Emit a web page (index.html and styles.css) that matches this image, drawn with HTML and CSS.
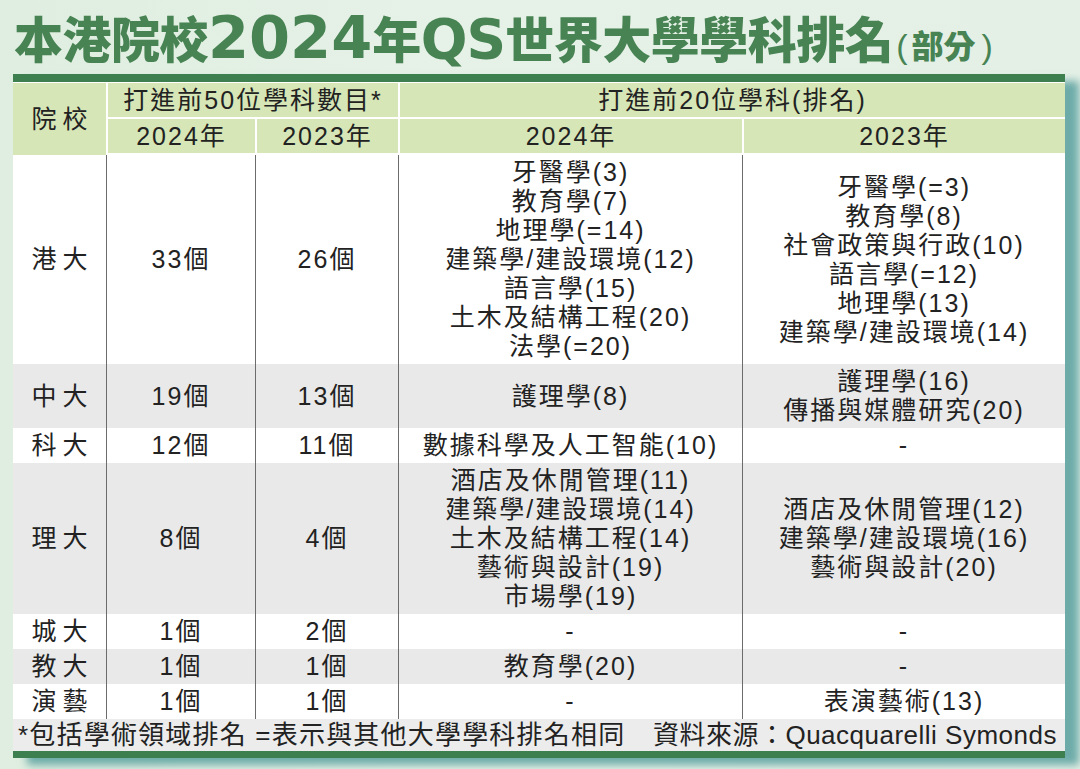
FILE: index.html
```html
<!DOCTYPE html>
<html lang="zh-Hant">
<head>
<meta charset="utf-8">
<title>本港院校2024年QS世界大學學科排名</title>
<link rel="stylesheet" href="styles.css">
</head>
<body>
<div class="page">
  <h1 class="title">本港院校<span class="num">2024</span>年<span class="qs">QS</span>世界大學學科排名<span class="sub"><span class="p">(</span>部分<span class="p pr">)</span></span></h1>
  <div class="panel">
    <table class="rank">
      <colgroup>
        <col class="c1"><col class="c2"><col class="c3"><col class="c4"><col class="c5">
      </colgroup>
      <thead>
        <tr>
          <th rowspan="2" class="school">院校</th>
          <th colspan="2" class="top">打進前50位學科數目*</th>
          <th colspan="2" class="top">打進前20位學科(排名)</th>
        </tr>
        <tr>
          <th>2024年</th>
          <th>2023年</th>
          <th>2024年</th>
          <th>2023年</th>
        </tr>
      </thead>
      <tbody>
        <tr class="w">
          <td class="school">港大</td>
          <td>33個</td>
          <td>26個</td>
          <td>牙醫學(3)<br>教育學(7)<br>地理學(=14)<br>建築學/建設環境(12)<br>語言學(15)<br>土木及結構工程(20)<br>法學(=20)</td>
          <td>牙醫學(=3)<br>教育學(8)<br>社會政策與行政(10)<br>語言學(=12)<br>地理學(13)<br>建築學/建設環境(14)</td>
        </tr>
        <tr class="g">
          <td class="school">中大</td>
          <td>19個</td>
          <td>13個</td>
          <td>護理學(8)</td>
          <td>護理學(16)<br>傳播與媒體研究(20)</td>
        </tr>
        <tr class="w">
          <td class="school">科大</td>
          <td>12個</td>
          <td>11個</td>
          <td>數據科學及人工智能(10)</td>
          <td>-</td>
        </tr>
        <tr class="g">
          <td class="school">理大</td>
          <td>8個</td>
          <td>4個</td>
          <td>酒店及休閒管理(11)<br>建築學/建設環境(14)<br>土木及結構工程(14)<br>藝術與設計(19)<br>市場學(19)</td>
          <td>酒店及休閒管理(12)<br>建築學/建設環境(16)<br>藝術與設計(20)</td>
        </tr>
        <tr class="w">
          <td class="school">城大</td>
          <td>1個</td>
          <td>2個</td>
          <td>-</td>
          <td>-</td>
        </tr>
        <tr class="g">
          <td class="school">教大</td>
          <td>1個</td>
          <td>1個</td>
          <td>教育學(20)</td>
          <td>-</td>
        </tr>
        <tr class="w">
          <td class="school">演藝</td>
          <td>1個</td>
          <td>1個</td>
          <td>-</td>
          <td>表演藝術(13)</td>
        </tr>
      </tbody>
    </table>
    <div class="foot">
      <span class="note">*包括學術領域排名 =表示與其他大學學科排名相同</span>
      <span class="src">資料來源：Quacquarelli Symonds</span>
    </div>
  </div>
</div>
</body>
</html>
```

FILE: styles.css
```css
html, body {
  margin: 0;
  padding: 0;
}

body {
  width: 1080px;
  height: 769px;
  overflow: hidden;
  background: linear-gradient(90deg, #dfeee0 0%, #e6f1e7 40%, #e4f0e6 100%);
  font-family: "Liberation Sans", "Noto Sans CJK TC", sans-serif;
  color: #222;
}

.page {
  padding: 0 0 0 13px;
}

.title {
  margin: 0;
  padding: 9px 0 0 1px;
  height: 74px;
  box-sizing: border-box;
  font-family: "Noto Sans CJK TC", sans-serif;
  font-weight: 900;
  font-size: 49px;
  line-height: 56px;
  color: #478353;
  white-space: nowrap;
  letter-spacing: -0.5px;
}

.title .num {
  font-family: "DejaVu Sans", sans-serif;
  font-weight: 700;
  font-size: 59px;
  letter-spacing: 0;
}

.title .qs {
  font-family: "DejaVu Sans", sans-serif;
  font-weight: 700;
  font-size: 55px;
  letter-spacing: -1px;
}

.title .sub {
  font-size: 32px;
  font-weight: 900;
  letter-spacing: 0;
}

.title .sub .p {
  font-family: "Liberation Sans", sans-serif;
  font-weight: 400;
  font-size: 34px;
  margin: 0 4px 0 3px;
}

.title .sub .pr {
  margin: 0 0 0 6px;
}

.panel {
  width: 1052px;
  border-top: 8px solid #3e7f4f;
  box-shadow: 14px 7px 8px rgba(70, 148, 148, 0.75);
  background: #fff;
}

.rank {
  width: 1052px;
  table-layout: fixed;
  border-collapse: separate;
  border-spacing: 0;
  font-size: 25px;
  line-height: 29px;
  letter-spacing: 2px;
}

.c1 { width: 93px; }
.c2 { width: 149px; }
.c3 { width: 143px; }
.c4 { width: 344px; }
.c5 { width: 323px; }

.rank th {
  background: #d6e6b6;
  font-weight: 400;
  height: 34px;
  padding: 0;
  text-align: center;
  border-left: 2px solid #fff;
}

.rank thead tr:first-child th {
  border-top: 1px solid #fff;
}

.rank thead tr:first-child th.top {
  border-bottom: 2px solid #fff;
}

.rank th.school {
  border-left: 0;
  letter-spacing: 6px;
  text-indent: 6px;
}

.rank thead tr:last-child th {
  border-bottom: 2px solid #fff;
}

.rank td {
  padding: 3px 0;
  text-align: center;
  vertical-align: middle;
  border-left: 1px solid #6c6c6c;
}

.rank td.school {
  border-left: 0;
  letter-spacing: 6px;
  text-indent: 6px;
}

.rank tr.w td { background: #ffffff; }
.rank tr.g td { background: #e9e9e9; }

.foot {
  display: flex;
  justify-content: space-between;
  align-items: center;
  height: 32px;
  padding: 0 8px 0 5px;
  background: #ececec;
  border-bottom: 7px solid #3e7f4f;
  font-size: 26px;
  line-height: 32px;
  white-space: nowrap;
}

.foot .note {
  letter-spacing: 1.2px;
}

.foot .src {
  letter-spacing: 0.5px;
}
```
